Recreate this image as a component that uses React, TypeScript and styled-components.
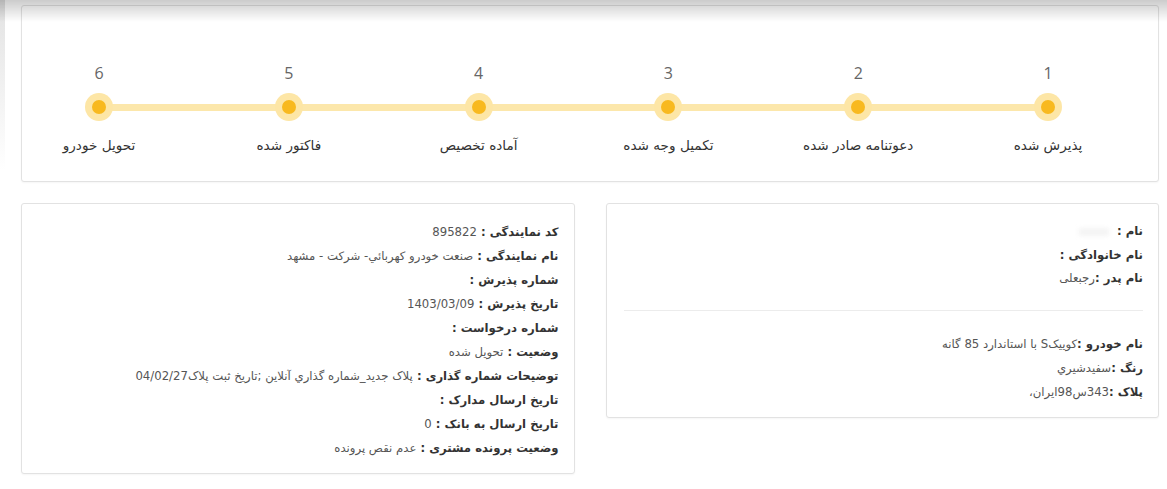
import React from 'react';
import styled, { createGlobalStyle } from 'styled-components';

const GlobalStyle = createGlobalStyle`
    html, body {
        margin: 0;
        padding: 0;
        background: #ffffff;
    }

    body {
        font-family: 'DejaVu Sans', 'Noto Sans', sans-serif;
        color: #333;
    }

    body::before {
        content: '';
        position: fixed;
        top: 0;
        left: 0;
        right: 0;
        height: 22px;
        background: linear-gradient(to bottom, rgba(0, 0, 0, 0.2), rgba(0, 0, 0, 0));
        pointer-events: none;
        z-index: 10;
    }
`;

const Page = styled.div`
    display: flex;
    direction: ltr;
    padding-right: 8px;
    min-height: 489px;
    box-sizing: border-box;
`;

const EdgeStrip = styled.div`
    width: 5px;
    height: 170px;
    flex-shrink: 0;
    background: linear-gradient(to bottom, #e2e2e2, rgba(235, 235, 235, 0));
`;

const Main = styled.div`
    flex: 1;
    margin-left: 16px;
    padding-top: 5px;
    direction: rtl;
    display: flex;
    flex-direction: column;
    gap: 21px;
`;

const Card = styled.div`
    background: #fff;
    border: 1px solid #e2e2e2;
    border-radius: 3px;
    box-shadow: 0 1px 2px rgba(0, 0, 0, 0.04);
    box-sizing: border-box;
`;

const StepperCard = styled(Card)`
    padding: 57px 0 26px;
`;

const Steps = styled.div`
    position: relative;
    display: flex;
    justify-content: space-between;
    padding: 0 50px 0 17px;

    &::before {
        content: '';
        position: absolute;
        top: 41px;
        right: 110px;
        left: 77px;
        height: 7px;
        background: #fce7ab;
    }
`;

const Step = styled.div`
    position: relative;
    width: 120px;
    display: flex;
    flex-direction: column;
    align-items: center;
`;

const StepNumber = styled.div`
    font-size: 16px;
    line-height: 20px;
    color: #666;
    font-family: 'Open Sans', 'DejaVu Sans', sans-serif;
`;

const Dot = styled.div`
    margin-top: 10px;
    width: 28px;
    height: 28px;
    border-radius: 50%;
    background: #fde6a6;
    display: flex;
    align-items: center;
    justify-content: center;

    &::after {
        content: '';
        width: 14px;
        height: 14px;
        border-radius: 50%;
        background: #f8b91f;
    }
`;

const StepLabel = styled.div`
    margin-top: 14px;
    font-size: 13.6px;
    line-height: 20px;
    color: #333;
    white-space: nowrap;
`;

const InfoRow = styled.div`
    display: grid;
    grid-template-columns: 1fr 1fr;
    gap: 31px;
    align-items: start;
`;

const InfoCard = styled(Card)`
    padding: 16px 15px 13px;
`;

const Line = styled.div<{ $tight?: boolean }>`
    font-size: 11.7px;
    line-height: ${({ $tight }) => ($tight ? '23.5px' : '24px')};
    color: #555;
    white-space: nowrap;
`;

const Label = styled.b`
    font-weight: bold;
    color: #333;
`;

const Divider = styled.hr`
    border: none;
    border-top: 1px solid #ececec;
    margin: 19px 0 21px 2px;
`;

const BlurredValue = styled.span`
    display: inline-block;
    width: 30px;
    height: 8px;
    margin-right: 4px;
    vertical-align: middle;
    background: #f4f4f4;
    filter: blur(2px);
`;

const steps = [
    'پذیرش شده',
    'دعوتنامه صادر شده',
    'تکمیل وجه شده',
    'آماده تخصیص',
    'فاکتور شده',
    'تحویل خودرو',
];

const details: [string, string][] = [
    ['کد نمایندگی : ', '895822'],
    ['نام نمایندگی : ', 'صنعت خودرو کهربائي- شرکت - مشهد'],
    ['شماره پذیرش : ', ''],
    ['تاریخ پذیرش : ', '1403/03/09'],
    ['شماره درخواست : ', ''],
    ['وضعیت : ', 'تحویل شده'],
    ['توضیحات شماره گذاری : ', 'پلاک جدید_شماره گذاري آنلاین ;تاریخ ثبت پلاک04/02/27'],
    ['تاریخ ارسال مدارک : ', ''],
    ['تاریخ ارسال به بانک : ', '0'],
    ['وضعیت پرونده مشتری : ', 'عدم نقص پرونده'],
];

const vehicle: [string, string][] = [
    ['نام خودرو :', 'کوییکS با استاندارد 85 گانه'],
    ['رنگ :', 'سفیدشیري'],
    ['پلاک :', '343س98ایران،'],
];

export default function App() {
    return (
        <>
            <GlobalStyle />
            <Page>
                <EdgeStrip />
                <Main>
                    <StepperCard>
                        <Steps>
                            {steps.map((label, i) => (
                                <Step key={label}>
                                    <StepNumber>{i + 1}</StepNumber>
                                    <Dot />
                                    <StepLabel>{label}</StepLabel>
                                </Step>
                            ))}
                        </Steps>
                    </StepperCard>
                    <InfoRow>
                        <InfoCard>
                            <Line $tight>
                                <Label>نام : </Label>
                                <BlurredValue />
                            </Line>
                            <Line $tight>
                                <Label>نام خانوادگی : </Label>
                            </Line>
                            <Line $tight>
                                <Label>نام پدر :</Label>رجبعلی
                            </Line>
                            <Divider />
                            {vehicle.map(([label, value]) => (
                                <Line key={label}>
                                    <Label>{label}</Label>
                                    {value}
                                </Line>
                            ))}
                        </InfoCard>
                        <InfoCard>
                            {details.map(([label, value]) => (
                                <Line key={label}>
                                    <Label>{label}</Label>
                                    {value}
                                </Line>
                            ))}
                        </InfoCard>
                    </InfoRow>
                </Main>
            </Page>
        </>
    );
}
